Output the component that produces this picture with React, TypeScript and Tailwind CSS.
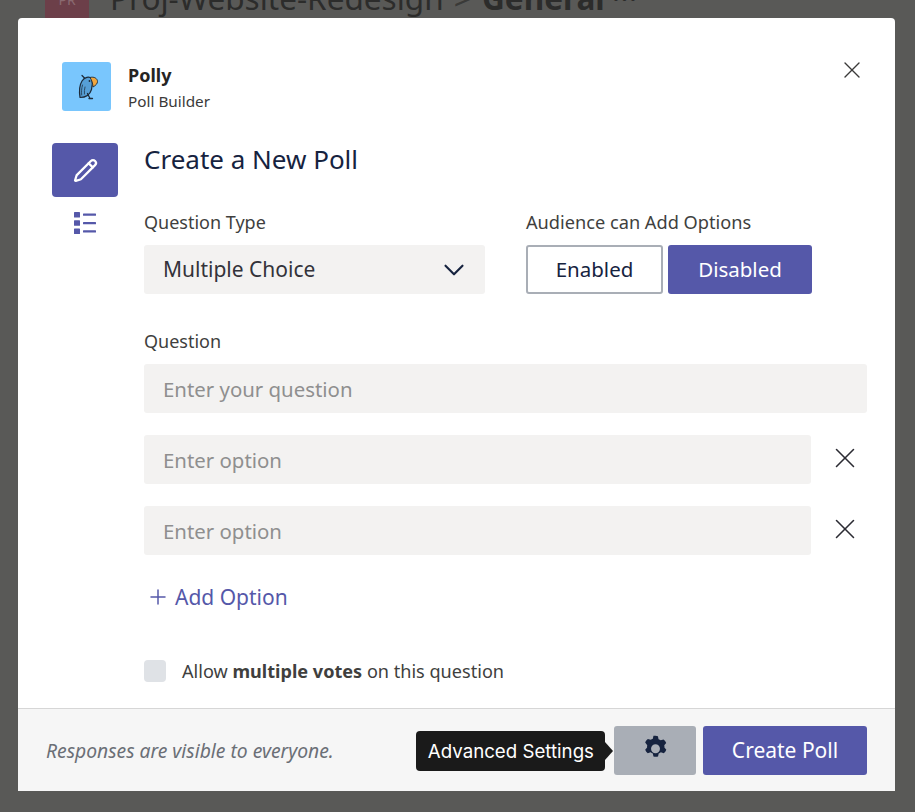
import { ChevronDown, Plus, X, Pencil } from 'lucide-react';

const font = "font-['Noto_Sans',sans-serif]";

const PollyLogo = () => (
  <svg viewBox="0 0 24 28" className="w-[24px] h-[28px]" fill="none">
    <path d="M7 2.500l2.500 2.500" stroke="#1d2b3a" strokeWidth="1.200" strokeLinecap="round" />
    <path d="M17 5.500C14 3 9.500 4 7 8c-2.500 4-3 10-2 16.500 5.500 0 10-3 11.500-8 .8-2.800 1.200-6 .5-11z" fill="#569fd6" stroke="#1d2b3a" strokeWidth="1.200" strokeLinejoin="round" />
    <path d="M15 4.500c4-1.200 7.500 1 7.500 4 0 2-1.500 3.800-4.500 5.500-.2-3.500-1-6.500-3-9.500z" fill="#f2a63c" stroke="#1d2b3a" strokeWidth="0.900" strokeLinejoin="round" />
    <path d="M7.500 12c-1 3.500-1.200 7-.8 10M10 14c-.6 2.500-.8 4.500-.6 7" stroke="#2b4a63" strokeWidth="1" strokeLinecap="round" />
    <path d="M12.500 20.500l2.500 5M14 25.500h3.500" stroke="#1d2b3a" strokeWidth="1.300" strokeLinecap="round" />
    <circle cx="14.500" cy="8" r="0.900" fill="#1d2b3a" />
  </svg>
);

const ListIcon = () => (
  <svg viewBox="0 0 22 22" className="w-[22px] h-[22px]" fill="#5558a9">
    <rect x="0" y="0" width="6" height="5.500" rx="0.600" />
    <rect x="0" y="8.300" width="6" height="5.500" rx="0.600" />
    <rect x="0" y="16.500" width="6" height="5.500" rx="0.600" />
    <rect x="9" y="1.500" width="13" height="2.200" rx="0.500" />
    <rect x="9" y="10" width="13" height="2.200" rx="0.500" />
    <rect x="9" y="18.200" width="13" height="2.200" rx="0.500" />
  </svg>
);

const GearIcon = () => (
  <svg viewBox="3 1 18 22" className="w-[23px] h-[28px]" fill="#16233f">
    <path
      fillRule="evenodd"
      d="M12 1.500c.7 0 1.300.2 1.900.5l.5 2.300c.6.200 1.200.5 1.700.9l2.200-.7c.9.700 1.700 1.600 2.100 2.700l-1.500 1.800c.1.600.2 1.200.1 1.800l1.500 1.700c-.4 1.100-1.100 2.100-2 2.800l-2.300-.7c-.5.400-1.100.7-1.700.9l-.5 2.300c-1.200.3-2.400.3-3.600 0l-.5-2.300c-.6-.2-1.200-.5-1.700-.9l-2.300.7c-.9-.7-1.600-1.700-2-2.800l1.500-1.700c-.1-.6 0-1.200.1-1.800L3.900 6.800C4.300 5.700 5.100 4.800 6 4.100l2.200.7c.5-.4 1.100-.7 1.700-.9l.5-2.300c.5-.1 1-.1 1.600-.1zM12 8.300a3.500 3.500 0 1 0 0 7 3.500 3.500 0 0 0 0-7z"
    />
  </svg>
);

const OptionRow = () => (
  <div className="flex items-center mt-[22px]">
    <div className="w-[667px] h-[49px] bg-[#f3f2f1] rounded-[3px] px-[19px] pt-[1px] flex items-center text-[20.4px] text-[#8f8f8f]">
      Enter option
    </div>
    <button className="ml-[17px] -mt-[4px] text-[#2b2b33]">
      <X className="w-[34px] h-[34px]" strokeWidth={1.1} />
    </button>
  </div>
);

export default function App() {
  return (
    <div className={`relative w-[915px] h-[812px] bg-[#595957] overflow-hidden ${font}`}>
      {/* dimmed channel header behind the dialog */}
      <div className="absolute left-[45px] -top-[26px] flex items-center gap-[21px] text-[#2c2c2b]">
        <div className="w-[44px] h-[44px] bg-[#6c3f49] rounded-[2px] flex items-center justify-center text-[#8a6a70] text-[14px] pt-[4px]">
          PR
        </div>
        <div className="text-[31.5px] leading-[44px] whitespace-nowrap mt-[2px]">
          Proj-Website-Redesign <span className="mx-[2px] text-[#3a3a38]">&gt;</span> <span className="font-bold">General</span> <span className="-ml-[1px]">···</span>
        </div>
      </div>

      <div className="absolute left-[18px] top-[18px] w-[877px] h-[773px] bg-white rounded-t-[4px] flex flex-col">
        <div className="flex-1 relative">
          <div className="flex items-start pl-[44px] pt-[44px]">
            <div className="w-[49px] h-[49px] bg-[#79c6fd] rounded-[3px] flex items-center justify-center">
              <PollyLogo />
            </div>
            <div className="ml-[17px] -mt-[1px]">
              <div className="text-[18px] leading-[28px] font-bold text-[#252423]">Polly</div>
              <div className="text-[15.3px] leading-[22px] mt-[1px] text-[#3b3a39]">Poll Builder</div>
            </div>
          </div>

          <button className="absolute right-[29px] top-[38px] text-[#3b3a39]">
            <X className="w-[28px] h-[28px]" strokeWidth={1.2} />
          </button>

          <div className="flex mt-[31px] pl-[34px]">
            <div className="w-[66px] flex flex-col items-center">
              <div className="w-[66px] h-[54px] bg-[#5558a9] rounded-[4px] flex items-center justify-center">
                <Pencil className="w-[25px] h-[25px] text-white" strokeWidth={2.2} />
              </div>
              <div className="mt-[15px]">
                <ListIcon />
              </div>
            </div>

            <div className="ml-[26px] w-[723px]">
              <h1 className="text-[26px] leading-[36px] text-[#16233f] -mt-[2px]">Create a New Poll</h1>

              <div className="flex mt-[32px]">
                <div className="w-[341px]">
                  <div className="text-[18px] leading-[26px] text-[#403f3e]">Question Type</div>
                  <div className="mt-[10px] h-[49px] bg-[#f3f2f1] rounded-[3px] pl-[19px] pr-[14px] pt-[1px] flex items-center justify-between text-[21px] text-[#33333a]">
                    Multiple Choice
                    <ChevronDown className="w-[34px] h-[34px] text-[#16233f]" strokeWidth={1.5} />
                  </div>
                </div>
                <div className="ml-[41px]">
                  <div className="text-[18.2px] leading-[26px] text-[#403f3e]">Audience can Add Options</div>
                  <div className="mt-[10px] flex gap-[5px]">
                    <button className="w-[137px] h-[49px] border-[2px] border-[#a9aeb6] rounded-[3px] text-[20.5px] text-[#16233f]">
                      Enabled
                    </button>
                    <button className="w-[144px] h-[49px] bg-[#5558a9] rounded-[3px] text-[20.5px] text-white">
                      Disabled
                    </button>
                  </div>
                </div>
              </div>

              <div className="text-[18px] leading-[26px] text-[#403f3e] mt-[34px]">Question</div>
              <div className="mt-[10px] h-[49px] bg-[#f3f2f1] rounded-[3px] px-[19px] pt-[1px] flex items-center text-[20.4px] text-[#8f8f8f]">
                Enter your question
              </div>
              <OptionRow />
              <OptionRow />

              <button className="mt-[24px] flex items-center text-[#5558a9] text-[21px] leading-[36px]">
                <Plus className="w-[24px] h-[24px] mr-[5px] ml-[2px]" strokeWidth={1.5} />
                Add Option
              </button>

              <label className="mt-[43px] flex items-center text-[18.1px] leading-[26px] text-[#403f3e]">
                <span className="w-[22px] h-[22px] bg-[#dfe2e6] rounded-[4px] mr-[16px]" />
                <span>
                  Allow <b className="font-bold">multiple votes</b> on this question
                </span>
              </label>
            </div>
          </div>
        </div>

        <div className="h-[83px] bg-[#f6f6f6] border-t border-[#d6d6d6] flex items-center pl-[28px] pr-[28px]">
          <div className="italic text-[19.3px] text-[#6b6f76] pt-[3px]">Responses are visible to everyone.</div>
          <div className="ml-auto flex items-center">
            <div className="relative mr-[9px] mt-[1px] h-[40px] pl-[12px] pr-[11px] bg-[#1a1a1a] rounded-[4px] flex items-center text-white text-[18.7px] pt-[3px] font-['Inter',sans-serif]">
              Advanced Settings
              <span className="absolute -right-[8px] top-1/2 -translate-y-1/2 w-0 h-0 border-y-[9px] border-y-transparent border-l-[8px] border-l-[#1a1a1a]" />
            </div>
            <button className="w-[82px] h-[49px] bg-[#a9aeb6] rounded-[3px] flex items-center justify-center pb-[2px]">
              <GearIcon />
            </button>
            <button className="ml-[7px] w-[164px] h-[49px] bg-[#5558a9] rounded-[3px] text-white text-[21px] pt-[2px]">
              Create Poll
            </button>
          </div>
        </div>
      </div>
    </div>
  );
}
